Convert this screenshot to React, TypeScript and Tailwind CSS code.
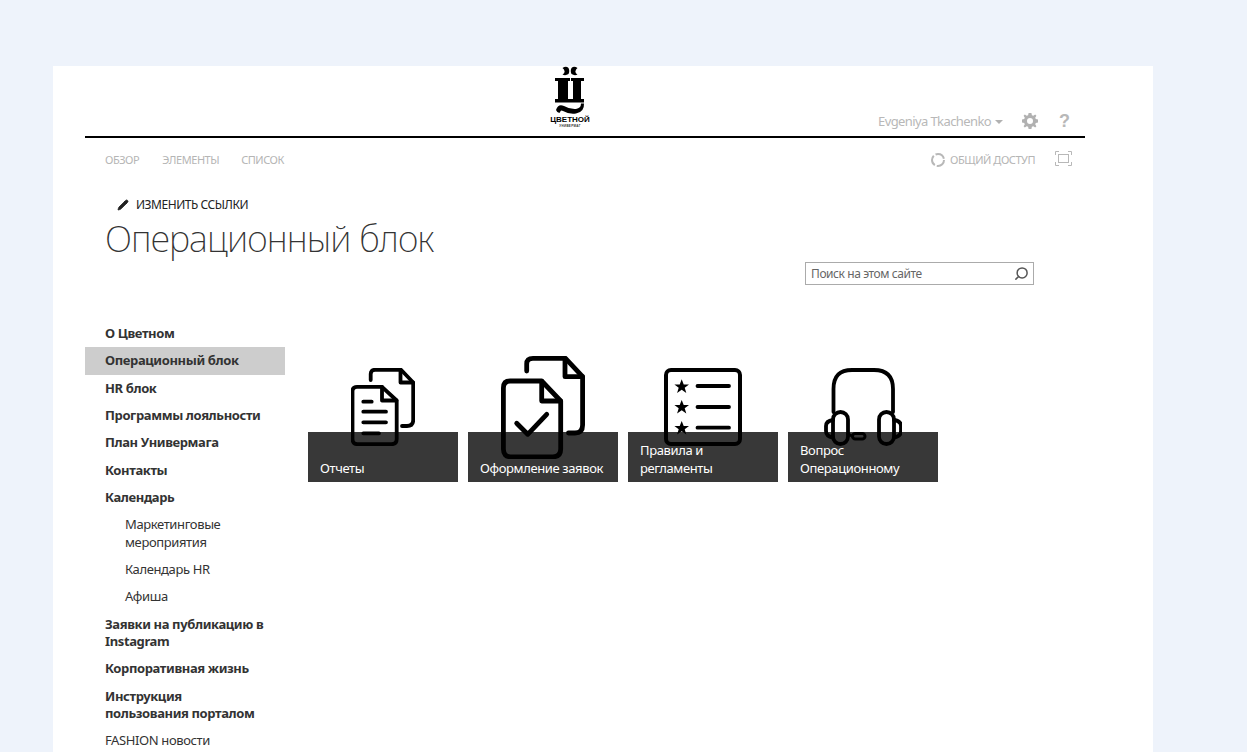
import { Pencil, Search } from 'lucide-react';

const nav = [
  { label: 'О Цветном', bold: true },
  { label: 'Операционный блок', bold: true, active: true },
  { label: 'HR блок', bold: true },
  { label: 'Программы лояльности', bold: true },
  { label: 'План Универмага', bold: true },
  { label: 'Контакты', bold: true },
  { label: 'Календарь', bold: true },
  { label: 'Маркетинговые\nмероприятия', sub: true },
  { label: 'Календарь HR', sub: true },
  { label: 'Афиша', sub: true },
  { label: 'Заявки на публикацию в\nInstagram', bold: true },
  { label: 'Корпоративная жизнь', bold: true },
  { label: 'Инструкция\nпользования порталом', bold: true },
  { label: 'FASHION новости' },
];

function ReportsIcon() {
  return (
    <svg width="64" height="78" viewBox="0 0 64 78" fill="none" stroke="#000" strokeWidth="3.8" strokeLinecap="round" strokeLinejoin="round">
      <path d="M19.7 12V6Q19.7 1.8 24 1.8H50L62.2 14.5V52Q62.2 58 56 58H51" />
      <path d="M49.5 2V14.5H62" />
      <path d="M6 18.8H31L45.7 32.5V71Q45.7 76.2 40.5 76.2H6.5Q1.5 76.2 1.5 71V23.5Q1.5 18.8 6 18.8Z" />
      <path d="M31 19V32.5H45.5M12.3 33.7H20.7M12.3 43.7H35M12.3 54.3H35M12.3 65.3H28" />
    </svg>
  );
}

function RequestsIcon() {
  return (
    <svg width="84" height="103" viewBox="0 0 84 103" fill="none" stroke="#000" strokeWidth="4.8" strokeLinecap="round" strokeLinejoin="round">
      <path d="M25.7 15V8Q25.7 2.4 32 2.4H64.5L81.6 20.7V69Q81.6 77 74 77H67.5" />
      <path d="M64 2.5V20.7H81.5" />
      <path d="M9 25H40.7L59.7 45V93Q59.7 100.8 52 100.8H9.5Q2.4 100.8 2.4 93V32Q2.4 25 9 25Z" />
      <path d="M40.7 25.5V45H59.4M15.7 67.3L26.7 78.3L45.7 58.3" />
    </svg>
  );
}

function RulesIcon() {
  const star = 'M0 -7.4L2 -2.3L7.3 -2.3L3 1L4.6 6.2L0 3L-4.6 6.2L-3 1L-7.3 -2.3L-2 -2.3Z';
  return (
    <svg width="78" height="78" viewBox="0 0 78 78" fill="none" stroke="#000" strokeWidth="3.8" strokeLinecap="round">
      <rect x="2" y="2" width="74" height="74" rx="5" strokeWidth="4" />
      <path d="M33.5 18H65M33.5 39H65M33.5 59.7H65" />
      {[18.7, 39.3, 60.3].map((y) => (
        <path key={y} d={star} transform={`translate(17.7 ${y})`} fill="#000" stroke="none" />
      ))}
    </svg>
  );
}

function HeadsetIcon() {
  return (
    <svg width="78" height="78" viewBox="0 0 78 78" fill="none" stroke="#000" strokeWidth="3.8" strokeLinecap="round" strokeLinejoin="round">
      <path d="M9.5 44V21Q9.5 2 28 2H50Q69 2 69 21V44" />
      <rect x="9" y="44" width="15" height="32" rx="7.5" />
      <rect x="55" y="44" width="15" height="32" rx="7.5" />
      <path d="M9 52Q2 53 2 58V63Q2 68.5 9 69.5M70 52Q77 53 77 58V63Q77 68.5 70 69.5" />
      <rect x="28.5" y="65.5" width="12.5" height="5.6" rx="2.8" strokeWidth="3" />
      <path d="M24 66L28 68" strokeWidth="3" />
    </svg>
  );
}

function Logo() {
  return (
    <div className="w-10 h-[70px] flex flex-col items-center">
      <svg width="30" height="50" viewBox="0 0 30 50" fill="#000" className="shrink-0">
        <path d="M7.500 2Q11 -0.500 13.500 2Q15 5 13.500 8Q10.500 10 7.500 8.500Q10 7 9.500 5Q9 3 7.500 2ZM22.500 2Q19 -0.500 16.500 2Q15 5 16.500 8Q19.500 10 22.500 8.500Q20 7 20.500 5Q21 3 22.500 2Z" />
        <path d="M0 12H15V15H13V33H18V15H16V12H29V15H26V33H29V36.500H0V33H3V15H0Z" />
        <path d="M1 44Q3 37.500 9 40Q15 43.500 21 43Q26 42 26 37.500H29Q29.500 46 21 47.500Q14 48.500 8 45Q5.500 43.500 5 46.500Q2.500 47.500 1 44Z" />
      </svg>
      <span className="font-['Liberation_Sans',sans-serif] font-bold text-[8px] leading-[8px] text-black whitespace-nowrap">ЦВЕТНОЙ</span>
      <span className="font-['Liberation_Sans',sans-serif] font-bold text-[3px] leading-[5px] tracking-[0.3px] text-[#333] whitespace-nowrap">УНИВЕРМАГ</span>
    </div>
  );
}

function Tile({ label, icon }: { label: string; icon: React.ReactNode }) {
  return (
    <div className="relative w-[150px] h-[150px] flex items-center justify-center">
      {icon}
      <div className="absolute left-0 right-0 bottom-0 h-[50px] bg-[rgba(0,0,0,0.78)] text-white text-[13px] leading-[18px] tracking-[-0.38px] pl-3 flex items-end pb-[5px] whitespace-pre-line">
        <span>{label}</span>
      </div>
    </div>
  );
}

export default function App() {
  return (
    <div className="h-[752px] overflow-hidden bg-[#eef3fb] pt-[66px] pl-[53px] font-['Noto_Sans',sans-serif]">
      <div className="w-[1100px] h-[686px] bg-white px-8">
        {/* Top bar */}
        <div className="w-[1000px] h-[72px] border-b-2 border-black flex items-start">
          <div className="ml-[465px]">
            <Logo />
          </div>
          <div className="ml-auto mt-[45px] mr-[15px] flex items-center text-[#b8b8b8]">
            <span className="text-[13px] leading-5 tracking-[-0.6px]">Evgeniya Tkachenko</span>
            <span className="ml-[4px] mt-[2px] w-0 h-0 border-x-[4px] border-x-transparent border-t-[4px] border-t-[#b1b1b1]" />
            <svg width="16" height="16" viewBox="0 0 16 16" fill="#b1b1b1" className="ml-[19px]">
              <path fillRule="evenodd" d="M6.6 0H9.4L9.9 2.2L11.3 2.8L13.2 1.6L14.4 2.800L13.2 4.7L13.8 6.1L16 6.6V9.4L13.8 9.9L13.2 11.3L14.4 13.2L13.2 14.4L11.3 13.2L9.9 13.8L9.4 16H6.6L6.1 13.8L4.7 13.2L2.8 14.4L1.6 13.2L2.8 11.3L2.2 9.9L0 9.4V6.6L2.2 6.1L2.8 4.7L1.6 2.8L2.8 1.6L4.7 2.8L6.1 2.2ZM8 5A3 3 0 1 0 8 11A3 3 0 1 0 8 5Z" />
            </svg>
            <span className="ml-[21px] text-[18px] leading-5 font-bold font-['Liberation_Sans',sans-serif]">?</span>
          </div>
        </div>

        {/* Page tabs */}
        <div className="w-[1000px] h-[44px] flex items-center text-[11px] tracking-[-0.45px] text-[#b5b5b5] uppercase pl-5">
          <span>Обзор</span>
          <span className="ml-[23px]">Элементы</span>
          <span className="ml-[22px]">Список</span>
          <div className="ml-auto mr-[13px] flex items-center">
            <svg width="16" height="16" viewBox="0 0 16 16" fill="none" stroke="#b8b8b8" strokeWidth="2">
              <circle cx="8" cy="8" r="6" strokeDasharray="10.5 2" />
            </svg>
            <span className="ml-[4px] mr-[20px]">Общий доступ</span>
            <svg width="17" height="15" viewBox="0 0 17 15" fill="none" stroke="#b8b8b8" strokeWidth="1" className="-mt-[3px]">
              <path d="M.5 4V.5H4M13 .5H16.5V4M16.5 11V14.5H13M4 14.5H.5V11" />
              <rect x="3.5" y="3.5" width="10" height="8" />
            </svg>
          </div>
        </div>

        {/* Title block */}
        <div className="pl-5">
          <div className="ml-[12px] mt-[13px] flex items-center gap-[7px] text-[12px] leading-5 tracking-[-0.45px] text-[#222] uppercase">
            <Pencil size={12} fill="#222" strokeWidth={1.5} />
            <span>Изменить ссылки</span>
          </div>
          <h1 className="mt-[1px] text-[36px] leading-[46px] font-extralight tracking-[-0.85px] text-[#333]">Операционный блок</h1>
        </div>

        {/* Search */}
        <div className="ml-[720px] w-[229px] h-[23px] border border-[#ababab] flex items-center pl-[5px] pr-1 text-[12px] tracking-[-0.42px] text-[#666]">
          <span>Поиск на этом сайте</span>
          <Search size={15} strokeWidth={2.4} className="ml-auto text-[#555] -scale-x-100" />
        </div>

        {/* Body */}
        <div className="mt-[35px] flex items-start">
          <div className="w-[200px] shrink-0 text-[13px] leading-[17.33px] tracking-[-0.38px] text-[#333]">
            {nav.map((item) => (
              <div
                key={item.label}
                className={`py-[5px] whitespace-pre-line ${item.sub ? 'pl-10' : 'pl-5'} ${item.bold ? 'font-bold' : ''} ${item.active ? 'bg-[#cdcdcd]' : ''}`}
              >
                {item.label}
              </div>
            ))}
          </div>
          <div className="ml-[23px] mt-[12px] flex gap-[10px]">
            <Tile label="Отчеты" icon={<ReportsIcon />} />
            <Tile label="Оформление заявок" icon={<RequestsIcon />} />
            <Tile label={'Правила и\nрегламенты'} icon={<RulesIcon />} />
            <Tile label={'Вопрос\nОперационному'} icon={<HeadsetIcon />} />
          </div>
        </div>
      </div>
    </div>
  );
}
